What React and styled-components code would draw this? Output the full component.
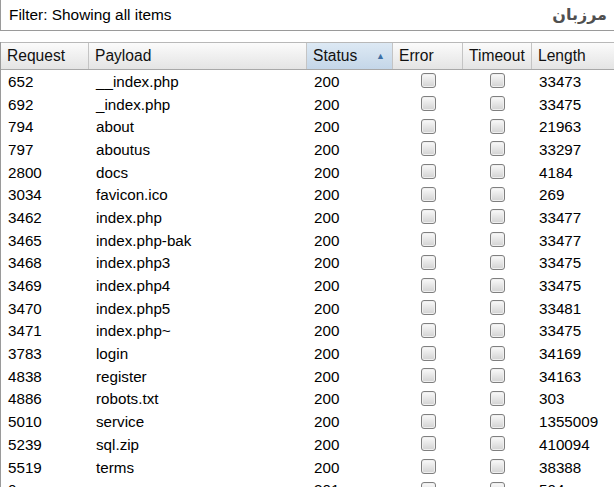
import React from "react";
import styled, { createGlobalStyle } from "styled-components";

const GlobalStyle = createGlobalStyle`
  html, body {
    margin: 0;
    padding: 0;
    background: #ffffff;
    overflow: hidden;
    height: 487px;
  }
  body {
    font-family: "Liberation Sans", Arial, sans-serif;
    color: #000;
  }
`;

const COLS = "88px 218px 86px 70px 69px 1fr";

const Page = styled.div`
  width: 614px;
  height: 487px;
  overflow: hidden;
  display: flex;
  flex-direction: column;
  background: #fff;
`;

const FilterBar = styled.div`
  flex: none;
  height: 31px;
  box-sizing: border-box;
  display: flex;
  align-items: center;
  justify-content: space-between;
  padding: 0 7px 1px 8px;
  border-left: 1px solid #9a9a9a;
  border-bottom: 1px solid #9a9a9a;
  font-size: 15.4px;
`;

const Watermark = styled.span`
  font-family: "DejaVu Sans", "Noto Sans", sans-serif;
  font-weight: bold;
  font-size: 16px;
  color: #505050;
  direction: rtl;
`;

const Table = styled.div`
  margin-top: 11px;
  border-left: 1px solid #9a9a9a;
  flex: 1;
  min-height: 0;
  overflow: hidden;
  display: flex;
  flex-direction: column;
`;

const Header = styled.div`
  flex: none;
  display: grid;
  grid-template-columns: ${COLS};
  height: 26px;
  border-top: 1px solid #b8b8b8;
  border-bottom: 1px solid #a8a8a8;
  background: linear-gradient(#fbfbfb, #e4e4e4);
`;

const HeadCell = styled.div`
  display: flex;
  align-items: center;
  justify-content: space-between;
  padding: 0 6px;
  font-size: 15.6px;
  color: #111;
  border-right: 1px solid #c4c4c4;
  background: ${(p) => (p.$sorted ? "linear-gradient(#dde9f4, #c4d6e8)" : "transparent")};
  &:last-child {
    border-right: none;
  }
`;

const SortArrow = styled.span`
  font-size: 9px;
  color: #3d6fa5;
  margin-right: 1px;
`;

const Row = styled.div`
  flex: none;
  display: grid;
  grid-template-columns: ${COLS};
  height: 22.7px;
  align-items: center;
  font-size: 15.2px;
`;

const Cell = styled.div`
  padding: 0 7px;
  white-space: nowrap;
  overflow: ${(p) => (p.$center ? "visible" : "hidden")};
  display: flex;
  justify-content: ${(p) => (p.$center ? "center" : "flex-start")};
  align-items: center;
`;

const Check = styled.span`
  display: block;
  flex: none;
  box-sizing: border-box;
  width: 15px;
  height: 15px;
  border: 1px solid #7f7f7f;
  border-radius: 3px;
  background: linear-gradient(#fafafa, #d2d2d2);
  box-shadow: inset 0 0 0 1px #efefef;
  margin-bottom: 1px;
`;

const rows = [
  ["652", "__index.php", "200", "33473"],
  ["692", "_index.php", "200", "33475"],
  ["794", "about", "200", "21963"],
  ["797", "aboutus", "200", "33297"],
  ["2800", "docs", "200", "4184"],
  ["3034", "favicon.ico", "200", "269"],
  ["3462", "index.php", "200", "33477"],
  ["3465", "index.php-bak", "200", "33477"],
  ["3468", "index.php3", "200", "33475"],
  ["3469", "index.php4", "200", "33475"],
  ["3470", "index.php5", "200", "33481"],
  ["3471", "index.php~", "200", "33475"],
  ["3783", "login", "200", "34169"],
  ["4838", "register", "200", "34163"],
  ["4886", "robots.txt", "200", "303"],
  ["5010", "service", "200", "1355009"],
  ["5239", "sql.zip", "200", "410094"],
  ["5519", "terms", "200", "38388"],
  ["0", "", "301", "504"],
];

export default function App() {
  return (
    <>
      <GlobalStyle />
      <Page>
        <FilterBar>
          <span>Filter: Showing all items</span>
          <Watermark>مرزبان</Watermark>
        </FilterBar>
        <Table>
          <Header>
            <HeadCell>Request</HeadCell>
            <HeadCell>Payload</HeadCell>
            <HeadCell $sorted>
              Status <SortArrow>▲</SortArrow>
            </HeadCell>
            <HeadCell>Error</HeadCell>
            <HeadCell>Timeout</HeadCell>
            <HeadCell>Length</HeadCell>
          </Header>
          {rows.map(([req, payload, status, length]) => (
            <Row key={req + payload}>
              <Cell>{req}</Cell>
              <Cell>{payload}</Cell>
              <Cell>{status}</Cell>
              <Cell $center>
                <Check />
              </Cell>
              <Cell $center>
                <Check />
              </Cell>
              <Cell>{length}</Cell>
            </Row>
          ))}
        </Table>
      </Page>
    </>
  );
}
